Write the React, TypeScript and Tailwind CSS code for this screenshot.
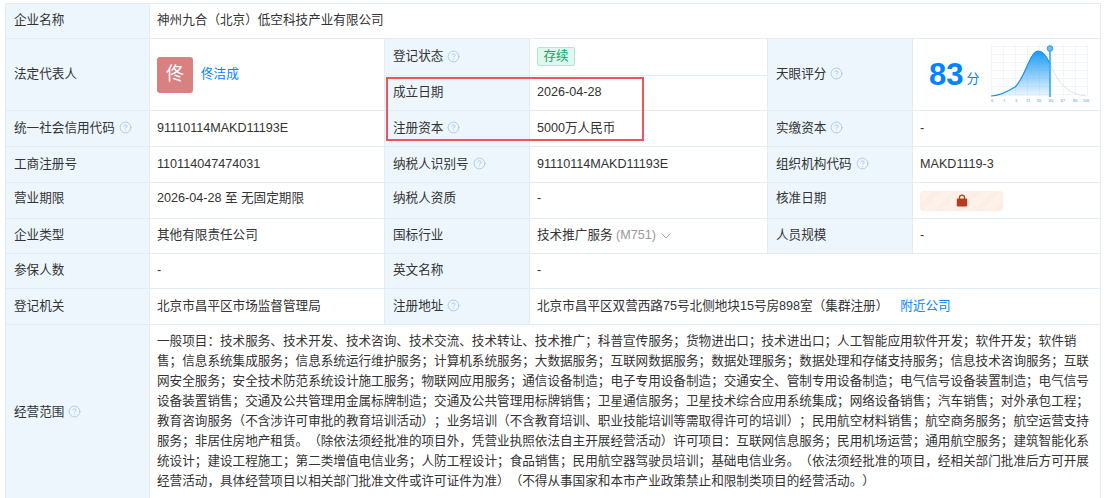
import { CircleHelp, ChevronDown } from 'lucide-react';

const Help = () => <CircleHelp size={13} strokeWidth={1.8} className="inline-block ml-[4px] -mt-[2px] text-[#a9cbe3] align-middle" />;

const labelCls = 'bg-[#edf6fd] border border-[#e4ecf3] px-[8px] align-middle text-[#333]';
const valueCls = 'border border-[#e4ecf3] px-[7px] align-middle text-[#333]';

const Label = ({ text, help, rowSpan }: { text: string; help?: boolean; rowSpan?: number }) => (
  <td className={labelCls} rowSpan={rowSpan}>{text}{help && <Help />}</td>
);

const ScoreChart = () => {
  const rise = 'M0 51 C8 51 16 47 24 42 C30 37 34 25 38 17 C41 10 44 6 47 6 C52 6 56 12 59 19';
  const ticks = [['0', 1], ['1', 13], ['3', 25], ['11', 37], ['50', 48], ['60', 60], ['67', 72], ['89', 84], ['100', 95]] as const;
  return (
    <svg width="104" height="62" viewBox="0 0 104 62" className="shrink-0">
      <defs>
        <linearGradient id="fill" x1="0" y1="0" x2="0" y2="1">
          <stop offset="0" stopColor="#1d9bf5" />
          <stop offset="1" stopColor="#1d9bf5" stopOpacity="0.08" />
        </linearGradient>
      </defs>
      {[0, 12, 24, 36, 48, 60, 72, 84, 96].map(x => <line key={x} x1={x + 0.5} x2={x + 0.5} y1="0" y2="51" stroke="#f1f5f9" />)}
      {[1, 9, 17, 25, 33, 41, 49].map(y => <line key={y} x1="0" x2="96" y1={y + 0.5} y2={y + 0.5} stroke="#f1f5f9" />)}
      <path d={`${rise} L59 51 Z`} fill="url(#fill)" />
      <path d="M59 19 C63 27 66 34 70 38 C76 45 84 50 95 51" fill="none" stroke="#dbe5ec" strokeWidth="1" />
      <path d={rise} fill="none" stroke="#1690f0" strokeWidth="1.2" />
      <line x1="59" x2="59" y1="4" y2="52" stroke="#3ca5f6" strokeWidth="1.6" />
      <circle cx="59" cy="3.500" r="2.800" fill="#6cbcf7" stroke="#2b9cf4" strokeWidth="1" />
      {ticks.map(([t, x]) => <text key={t} x={x} y="57" textAnchor="middle" fontSize="4" fontWeight="700" fill="#7cc3f7">{t}</text>)}
    </svg>
  );
};

export default function App() {
  return (
    <div className="w-[1105px] h-[498px] overflow-hidden bg-white pt-[3px] pl-[5px] text-[12.6px] leading-[21.2px] [text-spacing-trim:space-all] font-['Liberation_Sans','Noto_Sans_CJK_SC',sans-serif]">
      <div className="relative w-[1095px]">
        <table className="table-fixed border-collapse w-[1095px]">
          <colgroup>
            <col className="w-[144px]" />
            <col className="w-[235px]" />
            <col className="w-[145px]" />
            <col className="w-[238px]" />
            <col className="w-[145px]" />
            <col className="w-[188px]" />
          </colgroup>
          <tbody>
            <tr className="h-[35px]">
              <Label text="企业名称" />
              <td className={valueCls} colSpan={5}>神州九合（北京）低空科技产业有限公司</td>
            </tr>
            <tr className="h-[37px]">
              <Label text="法定代表人" rowSpan={2} />
              <td className={valueCls} rowSpan={2}>
                <div className="flex items-center gap-[8px]">
                  <div className="w-[36px] h-[36px] rounded-[3px] bg-[#d98080] text-white text-[18px] flex items-center justify-center">佟</div>
                  <a className="text-[#0084ff]">佟洁成</a>
                </div>
              </td>
              <Label text="登记状态" help />
              <td className={valueCls}>
                <span className="inline-block h-[19px] leading-[17px] px-[5.500px] rounded-[2px] border border-[#a6ecd0] bg-[#dff8ee] text-[#10a36a]">存续</span>
              </td>
              <Label text="天眼评分" help rowSpan={2} />
              <td className={valueCls} rowSpan={2}>
                <div className="flex items-center pl-[9px]">
                  <span className="text-[#0084ff] text-[31px] leading-none font-bold">83</span>
                  <span className="text-[#0084ff] text-[13px] ml-[3px] mt-[8px]">分</span>
                  <div className="ml-[11px] mt-[2px]"><ScoreChart /></div>
                </div>
              </td>
            </tr>
            <tr className="h-[35px]">
              <Label text="成立日期" />
              <td className={valueCls}>2026-04-28</td>
            </tr>
            <tr className="h-[36px]">
              <Label text="统一社会信用代码" help />
              <td className={valueCls}>91110114MAKD11193E</td>
              <Label text="注册资本" help />
              <td className={valueCls}>5000万人民币</td>
              <Label text="实缴资本" help />
              <td className={valueCls}>-</td>
            </tr>
            <tr className="h-[36px]">
              <Label text="工商注册号" />
              <td className={valueCls}>110114047474031</td>
              <Label text="纳税人识别号" help />
              <td className={valueCls}>91110114MAKD11193E</td>
              <Label text="组织机构代码" help />
              <td className={valueCls}>MAKD1119-3</td>
            </tr>
            <tr className="h-[36px] [&>td]:pb-[3px]">
              <Label text="营业期限" />
              <td className={valueCls}>2026-04-28 至 无固定期限</td>
              <Label text="纳税人资质" />
              <td className={valueCls}>-</td>
              <Label text="核准日期" />
              <td className={`${valueCls} !pb-0`}>
                <div className="w-[83px] h-[20px] rounded-[3px] bg-[repeating-linear-gradient(135deg,#fdf2ea_0px,#fdf2ea_8px,#fceee4_8px,#fceee4_14px)] border border-[#fbeee4] flex items-center justify-center">
                  <svg width="12" height="13" viewBox="0 0 12 13">
                    <path d="M3.500 5V3.600C3.500 2.200 4.600 1.200 6 1.200S8.500 2.200 8.500 3.600V5" fill="none" stroke="#b93a1c" strokeWidth="1.300" />
                    <rect x="0.800" y="4.600" width="10.400" height="7.800" rx="1.200" fill="#b93a1c" />
                  </svg>
                </div>
              </td>
            </tr>
            <tr className="h-[35px]">
              <Label text="企业类型" />
              <td className={valueCls}>其他有限责任公司</td>
              <Label text="国标行业" />
              <td className={valueCls}>
                技术推广服务 <span className="text-[#999]">(M751)</span>
                <ChevronDown size={16} strokeWidth={1.300} className="inline-block ml-[2px] -mt-[1px] text-[#999] align-middle" />
              </td>
              <Label text="人员规模" />
              <td className={valueCls}>-</td>
            </tr>
            <tr className="h-[35px]">
              <Label text="参保人数" />
              <td className={valueCls}>-</td>
              <Label text="英文名称" />
              <td className={valueCls} colSpan={3}>-</td>
            </tr>
            <tr className="h-[36px]">
              <Label text="登记机关" />
              <td className={valueCls}>北京市昌平区市场监督管理局</td>
              <Label text="注册地址" help />
              <td className={valueCls} colSpan={3}>
                北京市昌平区双营西路75号北侧地块15号房898室（集群注册）
                <a className="text-[#0084ff] ml-[12px]">附近公司</a>
              </td>
            </tr>
            <tr>
              <Label text="经营范围" help />
              <td className={`${valueCls} pt-[6px] pb-[9px] leading-[20px]`} colSpan={5}>
                一般项目：技术服务、技术开发、技术咨询、技术交流、技术转让、技术推广；科普宣传服务；货物进出口；技术进出口；人工智能应用软件开发；软件开发；软件销售；信息系统集成服务；信息系统运行维护服务；计算机系统服务；大数据服务；互联网数据服务；数据处理服务；数据处理和存储支持服务；信息技术咨询服务；互联网安全服务；安全技术防范系统设计施工服务；物联网应用服务；通信设备制造；电子专用设备制造；交通安全、管制专用设备制造；电气信号设备装置制造；电气信号设备装置销售；交通及公共管理用金属标牌制造；交通及公共管理用标牌销售；卫星通信服务；卫星技术综合应用系统集成；网络设备销售；汽车销售；对外承包工程；教育咨询服务（不含涉许可审批的教育培训活动）；业务培训（不含教育培训、职业技能培训等需取得许可的培训）；民用航空材料销售；航空商务服务；航空运营支持服务；非居住房地产租赁。（除依法须经批准的项目外，凭营业执照依法自主开展经营活动）许可项目：互联网信息服务；民用机场运营；通用航空服务；建筑智能化系统设计；建设工程施工；第二类增值电信业务；人防工程设计；食品销售；民用航空器驾驶员培训；基础电信业务。（依法须经批准的项目，经相关部门批准后方可开展经营活动，具体经营项目以相关部门批准文件或许可证件为准）（不得从事国家和本市产业政策禁止和限制类项目的经营活动。）
              </td>
            </tr>
          </tbody>
        </table>
        <div className="absolute left-[381px] top-[74px] w-[258px] h-[64px] border-2 border-[#f2535a] pointer-events-none" />
      </div>
    </div>
  );
}
